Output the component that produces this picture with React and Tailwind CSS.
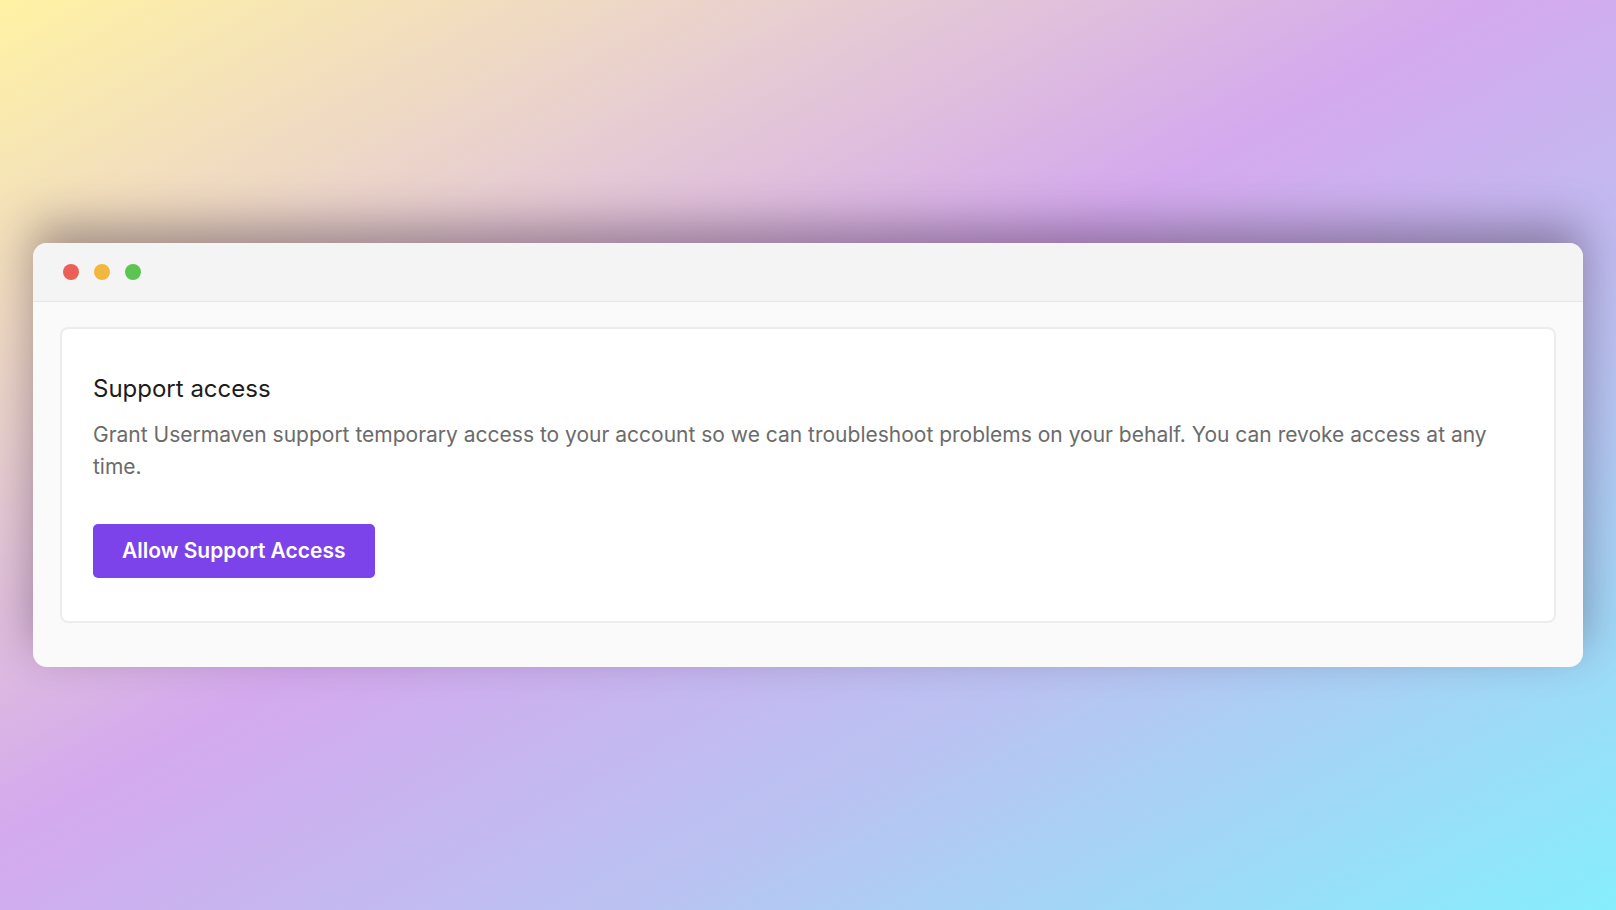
import React from 'react';

const font = { fontFamily: 'Inter, "Noto Sans", sans-serif' };

const WindowDots = () => (
  <div className="flex items-center gap-[15px]">
    <span className="w-[16px] h-[16px] rounded-full bg-[#ec5f57]" />
    <span className="w-[16px] h-[16px] rounded-full bg-[#f3b740]" />
    <span className="w-[16px] h-[16px] rounded-full bg-[#5cc451]" />
  </div>
);

const App = () => {
  return (
    <div
      className="w-[1616px] h-[910px] overflow-hidden bg-[linear-gradient(to_bottom_right,#fff3a4_0%,#e8cfd0_25%,#d4a9ee_46%,#b9c3f2_70%,#86eefd_100%)] pt-[243px] px-[33px] font-['Inter']"
      style={font}
    >
      <div className="rounded-[14px] overflow-hidden bg-[#fafafa] shadow-[0_-18px_45px_rgba(40,20,40,0.38)]">
        <div className="h-[59px] bg-[#f4f4f4] border-b border-[#e6e6e6] flex items-center pl-[30px]">
          <WindowDots />
        </div>

        <div className="pt-[25px] px-[27px] pb-[44px]">
          <div className="bg-white border-2 border-[#ececee] rounded-[8px] pt-[44px] pb-[43px] pl-[31px] pr-[29px]">
            <h2 className="text-[24px] leading-[32px] font-normal text-[#1c1c1c]">Support access</h2>
            <p className="mt-[14px] text-[21px] leading-[32px] text-[#6b6b6b]">
              Grant Usermaven support temporary access to your account so we can troubleshoot problems on your behalf. You can revoke access at any time.
            </p>
            <button className="mt-[41px] h-[54px] px-[29px] rounded-[5px] bg-[#7b43e9] text-white text-[21px] font-semibold">
              Allow Support Access
            </button>
          </div>
        </div>
      </div>
    </div>
  );
};

export default App;
